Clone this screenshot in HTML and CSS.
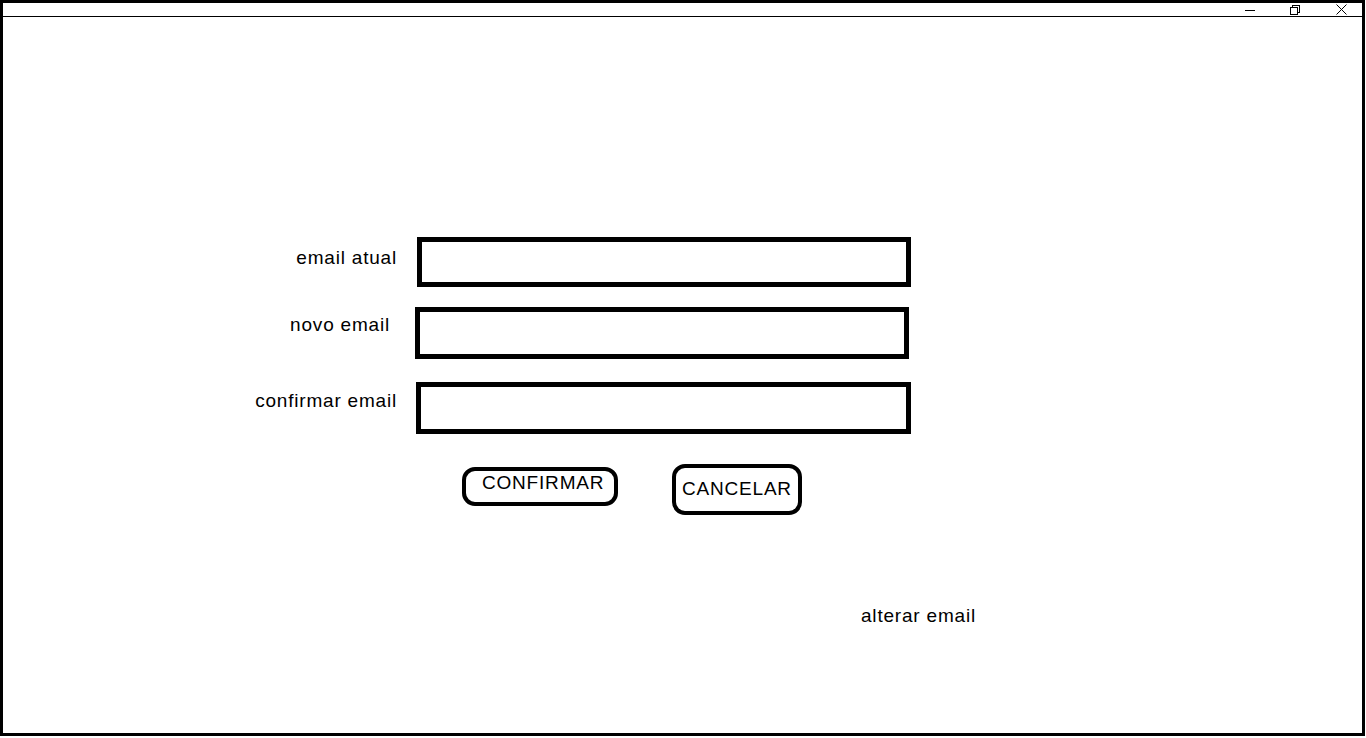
FILE: index.html
```html
<!DOCTYPE html>
<html lang="pt">
<head>
<meta charset="utf-8">
<title>alterar email</title>
<link rel="stylesheet" href="styles.css">
</head>
<body>
<div class="window">
  <div class="titlebar">
    <svg class="ctl ctl-min" width="10" height="1" viewBox="0 0 10 1"><rect x="0" y="0" width="10" height="1" fill="#000"/></svg>
    <svg class="ctl ctl-restore" width="10" height="10" viewBox="0 0 10 10" fill="none" stroke="#000" stroke-width="1" shape-rendering="crispEdges"><rect x="0.5" y="2.5" width="7" height="7"/><path d="M2.5 2.5V0.5H9.5V7.5H7.5"/></svg>
    <svg class="ctl ctl-close" width="11" height="11" viewBox="0 0 11 11" fill="none" stroke="#000" stroke-width="1"><path d="M0.5 0.5L10.5 10.5M10.5 0.5L0.5 10.5"/></svg>
  </div>
  <main class="content">
    <form class="form">
      <div class="row row-current">
        <label class="lbl">email atual</label>
        <div class="field"></div>
      </div>
      <div class="row row-new">
        <label class="lbl">novo email</label>
        <div class="field"></div>
      </div>
      <div class="row row-confirm">
        <label class="lbl">confirmar email</label>
        <div class="field"></div>
      </div>
      <div class="actions">
        <button type="button" class="btn btn-confirm">CONFIRMAR</button>
        <button type="button" class="btn btn-cancel">CANCELAR</button>
      </div>
    </form>
    <p class="caption">alterar email</p>
  </main>
</div>
</body>
</html>
```

FILE: styles.css
```css
html, body {
  margin: 0;
  padding: 0;
  background: #fff;
}

body {
  font-family: "Liberation Sans", Arial, sans-serif;
  font-size: 19px;
  line-height: 22px;
  color: #000;
  letter-spacing: 0.8px;
}

.window {
  box-sizing: border-box;
  width: 1365px;
  height: 736px;
  border: 3px solid #000;
  display: flex;
  flex-direction: column;
  overflow: hidden;
}

.titlebar {
  height: 13px;
  border-bottom: 1px solid #000;
  display: flex;
  justify-content: flex-end;
  align-items: flex-start;
  padding-right: 15px;
  flex: none;
}

.ctl {
  display: block;
  flex: none;
}

.ctl-min {
  margin-top: 7px;
}

.ctl-restore {
  margin-top: 2px;
  margin-left: 35px;
}

.ctl-close {
  margin-top: 1px;
  margin-left: 36px;
}

.content {
  flex: 1;
  display: flex;
  flex-direction: column;
}

.form {
  margin: 220px 0 0 0;
  display: flex;
  flex-direction: column;
}

.row {
  display: flex;
  align-items: flex-start;
  margin-left: 244px;
}

.lbl {
  box-sizing: border-box;
  width: 150px;
  text-align: right;
  flex: none;
}

.field {
  box-sizing: border-box;
  border: 5px solid #000;
  width: 494px;
  height: 50px;
  background: #fff;
}

.row-current .lbl {
  margin-top: 10px;
}

.row-current .field {
  margin-left: 20px;
}

.row-new {
  margin-top: 20px;
}

.row-new .lbl {
  margin-top: 7px;
  padding-right: 7px;
}

.row-new .field {
  margin-left: 18px;
  height: 52px;
}

.row-confirm {
  margin-top: 23px;
}

.row-confirm .lbl {
  margin-top: 8px;
}

.row-confirm .field {
  margin-left: 19px;
  width: 495px;
  height: 52px;
}

.actions {
  display: flex;
  align-items: flex-start;
  margin: 30px 0 0 459px;
}

.btn {
  box-sizing: border-box;
  display: block;
  font: inherit;
  line-height: 22px;
  letter-spacing: inherit;
  color: #000;
  background: #fff;
  border: 4px solid #000;
  text-align: left;
  margin: 0;
  cursor: pointer;
}

.btn-confirm {
  width: 156px;
  border-radius: 13px;
  padding: 1px 0 8px 16px;
  margin-top: 3px;
}

.btn-cancel {
  width: 130px;
  border-radius: 13px;
  padding: 10px 0 11px 6px;
  margin-left: 54px;
}

.caption {
  margin: 90px 0 0 858px;
}
```
